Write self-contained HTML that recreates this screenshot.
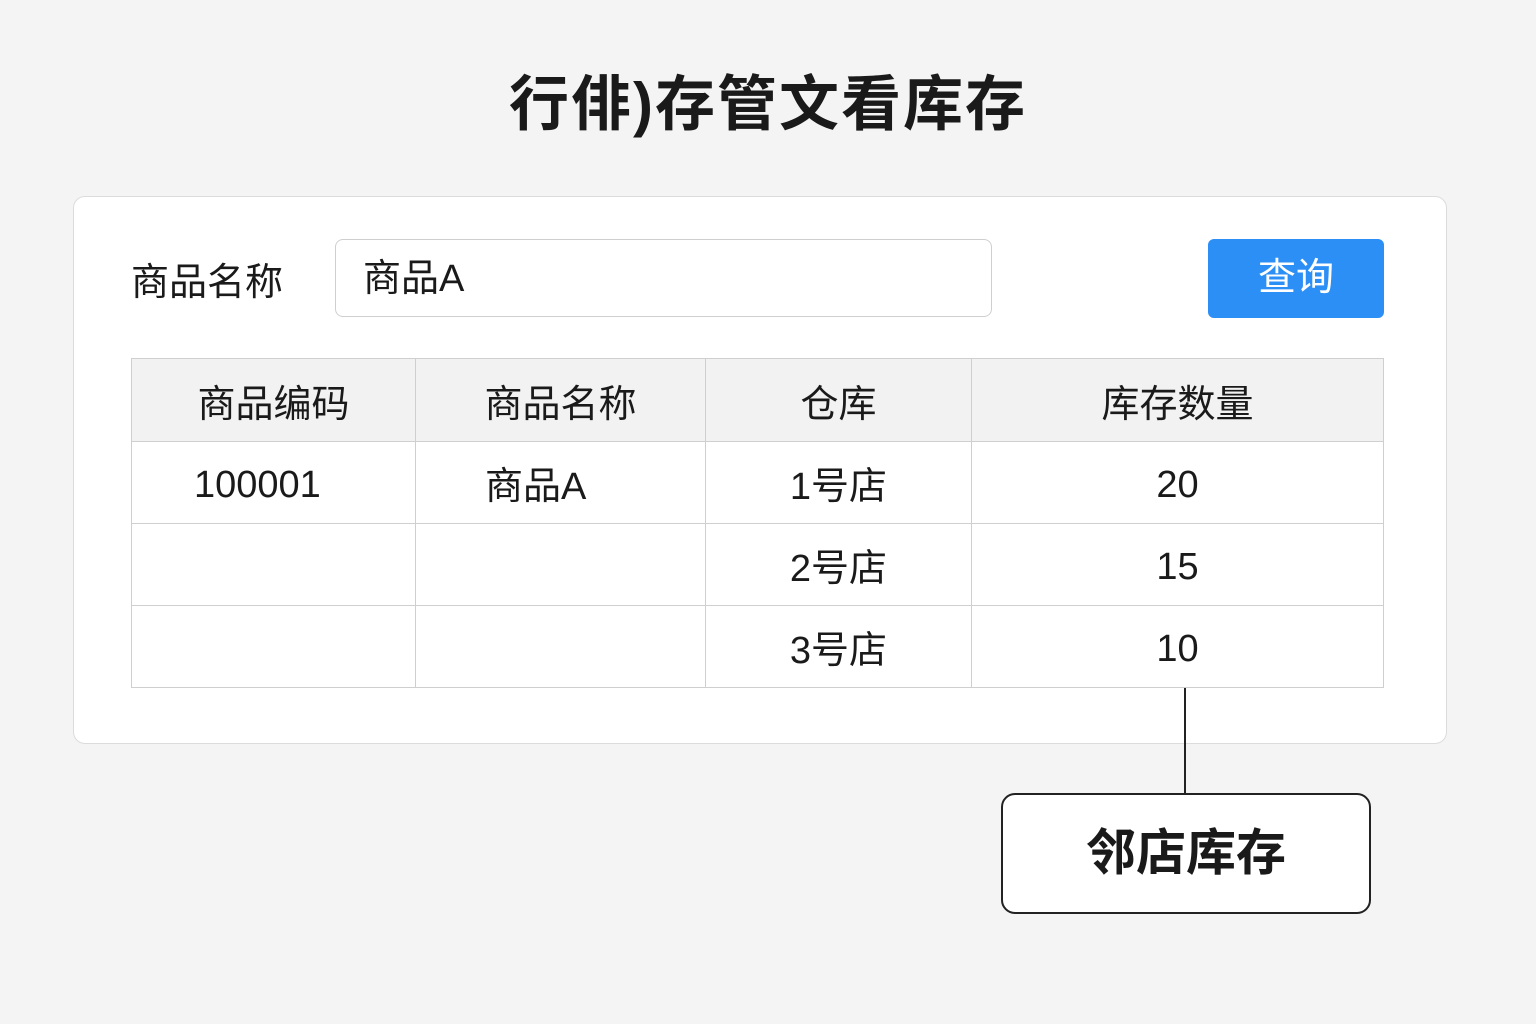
<!DOCTYPE html>
<html><head><meta charset="utf-8"><style>
body{margin:0;width:1536px;height:1024px;background:#f4f4f4;font-family:"Liberation Sans","Noto Sans CJK SC",sans-serif;color:#1a1a1a;position:relative;overflow:hidden}
.t{position:absolute;left:0;width:1536px;top:56px;text-align:center;font-size:60px;font-weight:bold;letter-spacing:2px}
.card{position:absolute;left:73px;top:196px;width:1372px;height:546px;background:#fff;border:1.5px solid #dcdcdc;border-radius:12px}
.lab{position:absolute;left:131px;top:251px;font-size:38px}
.inp{position:absolute;left:335px;top:239px;width:657px;height:78px;border:1.5px solid #cfcfcf;border-radius:8px;background:#fff;font-size:38px;line-height:78px;box-sizing:border-box;padding-left:27px}
.btn{position:absolute;left:1208px;top:239px;width:176px;height:79px;background:#2b8ff5;border-radius:6px;color:#fff;font-size:38px;text-align:center;line-height:79px}
table{position:absolute;left:131px;top:358px;border-collapse:collapse;font-size:38px}
td{border:1.5px solid #cfcfcf;text-align:center;height:81px;padding:0;vertical-align:middle}
tr.h td{background:#f2f2f2;height:82px}
.n{position:relative;top:3px}
.line{position:absolute;left:1184px;top:688px;width:2px;height:106px;background:#222}
.box{position:absolute;left:1001px;top:793px;width:366px;height:117px;border:2px solid #222;border-radius:14px;background:#fff;font-size:50px;font-weight:bold;text-align:center;line-height:117px}
</style></head><body>
<div class="t">行俳)存管文看库存</div>
<div class="card"></div>
<div class="lab">商品名称</div>
<div class="inp">商品A</div>
<div class="btn">查询</div>
<table>
<tr class="h"><td style="width:283px">商品编码</td><td style="width:289px">商品名称</td><td style="width:265px">仓库</td><td style="width:411px">库存数量</td></tr>
<tr><td style="text-align:left;padding-left:62px"><span class="n">100001</span></td><td style="text-align:left;padding-left:69px">商品A</td><td>1号店</td><td><span class="n">20</span></td></tr>
<tr><td></td><td></td><td>2号店</td><td><span class="n">15</span></td></tr>
<tr><td></td><td></td><td>3号店</td><td><span class="n">10</span></td></tr>
</table>
<div class="line"></div>
<div class="box">邻店库存</div>
</body></html>
